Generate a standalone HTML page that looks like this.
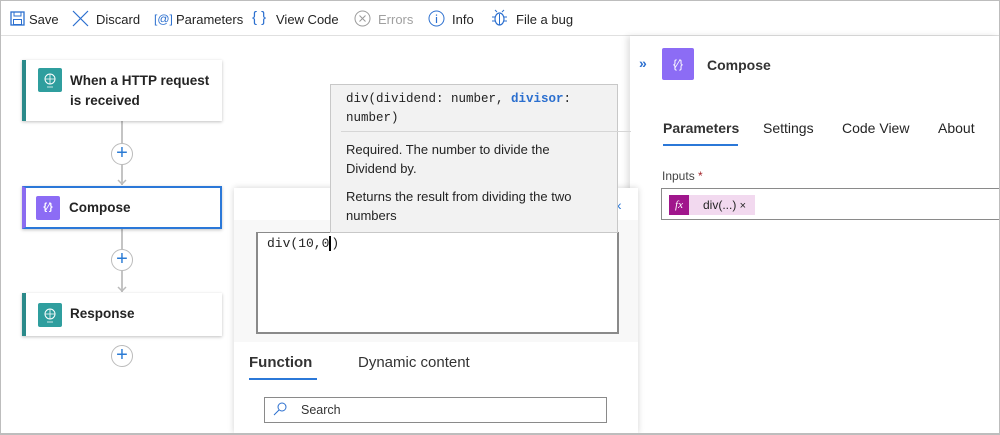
<!DOCTYPE html>
<html><head><style>
*{box-sizing:border-box;margin:0;padding:0}
body{width:1000px;height:435px;overflow:hidden;background:#fff;font-family:"Liberation Sans",sans-serif;font-size:13px;color:#242424;position:relative}
.abs{position:absolute}
.frame{position:absolute;left:0;top:0;width:1000px;height:435px;border:1px solid #bdbdbd;border-bottom-width:2px}
.tb{position:absolute;left:1px;top:1px;width:998px;height:35px;border-bottom:1px solid #e0e0e0}
.tb span{position:absolute;top:11px;font-size:13px}
.card{position:absolute;left:22px;width:200px;background:#fff;box-shadow:0 1px 3px rgba(0,0,0,.25);border-left:4px solid #2b8a8a;font-weight:bold;font-size:13.5px}
.ic{position:absolute;left:12px;width:24px;height:24px;border-radius:2px}
.plus{position:absolute;left:111px;width:22px;height:22px;border-radius:50%;border:1px solid #bbb;background:#fff;color:#2b7bd4;text-align:center;line-height:19px;font-size:20px}
.line{position:absolute;left:121px;width:2px;background:#c4c4c4}
.arr{position:absolute;left:117px;width:10px;height:6px}
.mono{font-family:"Liberation Mono",monospace}
</style></head><body>
<div class="tb">
<svg class="abs" style="left:9px;top:10px" width="15" height="15" viewBox="0 0 15 15"><rect x="1" y="1" width="13" height="13" fill="none" stroke="#2b6fcf" stroke-width="1.3"/><rect x="4" y="1" width="7" height="4" fill="none" stroke="#2b6fcf"/><rect x="3.5" y="8.5" width="8" height="5" fill="none" stroke="#2b6fcf"/></svg>
<span style="left:28px">Save</span>
<svg class="abs" style="left:71px;top:9px" width="17" height="17"><path d="M1 1L16 16M16 1L1 16" stroke="#2b6fcf" stroke-width="1.2"/></svg>
<span style="left:95px">Discard</span>
<span style="left:153px;color:#2b6fcf;font-size:12px;top:11px">[@]</span>
<span style="left:175px">Parameters</span>
<span style="left:251px;color:#2b6fcf;font-size:15px;top:8px">{ }</span>
<span style="left:275px">View Code</span>
<svg class="abs" style="left:353px;top:9px" width="17" height="17"><circle cx="8.5" cy="8.5" r="7.5" fill="none" stroke="#999"/><path d="M5.5 5.5L11.5 11.5M11.5 5.5L5.5 11.5" stroke="#999"/></svg>
<span style="left:377px;color:#a0a0a0">Errors</span>
<svg class="abs" style="left:427px;top:9px" width="17" height="17"><circle cx="8.5" cy="8.5" r="7.5" fill="none" stroke="#2b6fcf"/><path d="M8.5 7V13M8.5 4.5V5.8" stroke="#2b6fcf" stroke-width="1.2"/></svg>
<span style="left:451px">Info</span>
<svg class="abs" style="left:490px;top:8px" width="17" height="18"><ellipse cx="8.5" cy="10" rx="4.5" ry="6" fill="none" stroke="#2b6fcf" stroke-width="1.2"/><path d="M4 8H1M13 8H16M4 12H1M13 12H16M6 3L4 1M11 3L13 1M8.5 5V16" stroke="#2b6fcf"/></svg>
<span style="left:515px">File a bug</span>
</div>

<!-- flow -->
<div class="line" style="top:121px;height:23px"></div>
<div class="line" style="top:165px;height:20px"></div>
<svg class="arr" style="top:179px"><path d="M1 1L5 5L9 1" fill="none" stroke="#bbb" stroke-width="1.5"/></svg>
<div class="line" style="top:229px;height:20px"></div>
<div class="line" style="top:271px;height:21px"></div>
<svg class="arr" style="top:286px"><path d="M1 1L5 5L9 1" fill="none" stroke="#bbb" stroke-width="1.5"/></svg>
<div class="card" style="top:60px;height:61px"><div class="ic" style="top:8px;background:#2f9e9e"><svg width="24" height="24"><circle cx="12" cy="11" r="5" fill="none" stroke="#fff"/><path d="M7 11H17M12 6V16M9 19H15" stroke="#fff" stroke-width=".8"/></svg></div><div class="abs" style="left:44px;top:11px;line-height:20px">When a HTTP request<br>is received</div></div>
<div class="plus" style="top:143px">+</div>
<div class="card" style="top:186px;height:43px;border:2px solid #2b78d8;border-left:4px solid #8b6cf0"><div class="ic" style="top:8px;left:10px;background:#8c6cf5;color:#fff;font-size:10px;text-align:center;line-height:24px">{⁄}</div><div class="abs" style="left:43px;top:12px">Compose</div></div>
<div class="plus" style="top:249px">+</div>
<div class="card" style="top:293px;height:43px"><div class="ic" style="top:10px;background:#2f9e9e"><svg width="24" height="24"><circle cx="12" cy="11" r="5" fill="none" stroke="#fff"/><path d="M7 11H17M12 6V16M9 19H15" stroke="#fff" stroke-width=".8"/></svg></div><div class="abs" style="left:44px;top:13px">Response</div></div>
<div class="plus" style="top:345px">+</div>

<!-- right panel -->
<div class="abs" style="left:630px;top:36px;width:369px;height:397px;background:#fff;box-shadow:-3px 0 6px rgba(0,0,0,.12)"></div>
<div class="abs" style="left:639px;top:55px;color:#2b6fcf;font-weight:bold;font-size:14px">»</div>
<div class="abs" style="left:662px;top:48px;width:32px;height:32px;background:#8c6cf5;border-radius:2px;color:#fff;text-align:center;line-height:32px;font-size:12px">{⁄}</div>
<div class="abs" style="left:707px;top:57px;font-weight:bold;font-size:14px;color:#333">Compose</div>
<div class="abs" style="left:663px;top:120px;font-weight:bold;font-size:14px;color:#333">Parameters</div>
<div class="abs" style="left:663px;top:144px;width:75px;height:2px;background:#2b78d8"></div>
<div class="abs" style="left:763px;top:120px;font-size:14px">Settings</div>
<div class="abs" style="left:842px;top:120px;font-size:14px">Code View</div>
<div class="abs" style="left:938px;top:120px;font-size:14px">About</div>
<div class="abs" style="left:662px;top:169px;font-size:12px;color:#444">Inputs <span style="color:#a4262c">*</span></div>
<div class="abs" style="left:661px;top:188px;width:340px;height:32px;border:1px solid #8a8a8a"></div>
<div class="abs" style="left:669px;top:195px;width:20px;height:20px;background:#a0168c;color:#fff;font-family:'Liberation Serif',serif;font-style:italic;font-size:11px;text-align:center;line-height:20px">fx</div>
<div class="abs" style="left:689px;top:195px;width:66px;height:20px;background:#f2d9ef;font-size:12px;line-height:20px;padding-left:14px">div(...) <span style="font-size:11px">×</span></div>

<!-- expression popup -->
<div class="abs" style="left:234px;top:188px;width:404px;height:245px;background:#fff;box-shadow:0 0 6px rgba(0,0,0,.18)"></div>
<div class="abs" style="left:234px;top:220px;width:404px;height:122px;background:#f8f8f8"></div>
<div class="abs" style="left:256px;top:232px;width:363px;height:102px;border:2px solid #8a8a8a;border-top-width:1px;background:#fff"></div>
<div class="abs mono" style="left:267px;top:236px;font-size:13px">div(10,0<span style="border-left:2px solid #000"></span>)</div>
<div class="abs" style="left:249px;top:354px;font-weight:bold;font-size:15px;color:#333">Function</div>
<div class="abs" style="left:249px;top:378px;width:68px;height:2px;background:#2b78d8"></div>
<div class="abs" style="left:358px;top:354px;font-size:15px;color:#333">Dynamic content</div>
<div class="abs" style="left:264px;top:397px;width:343px;height:26px;border:1px solid #8a8a8a"></div>
<svg class="abs" style="left:272px;top:402px" width="16" height="14"><circle cx="10" cy="5" r="4" fill="none" stroke="#2b6fcf"/><path d="M7 8L2 13" stroke="#2b6fcf"/></svg>
<div class="abs" style="left:301px;top:403px;font-size:12.5px;color:#333">Search</div>
<div class="abs" style="left:617px;top:197px;color:#2b78d8;font-size:14px">‹</div>

<!-- tooltip -->
<div class="abs" style="left:330px;top:84px;width:288px;height:149px;background:#f2f2f2;border:1px solid #c8c8c8"></div>
<div class="abs mono" style="left:346px;top:90px;font-size:12.5px;line-height:19px;color:#222">div(dividend: number, <b style="color:#2b6fcf">divisor</b>:<br>number)</div>
<div class="abs" style="left:341px;top:131px;width:290px;height:1px;background:#d6d6d6"></div>
<div class="abs" style="left:346px;top:140px;font-size:13px;line-height:19px">Required. The number to divide the<br>Dividend by.</div>
<div class="abs" style="left:346px;top:187px;font-size:13px;line-height:19px">Returns the result from dividing the two<br>numbers</div>
<div class="frame"></div>
</body></html>
